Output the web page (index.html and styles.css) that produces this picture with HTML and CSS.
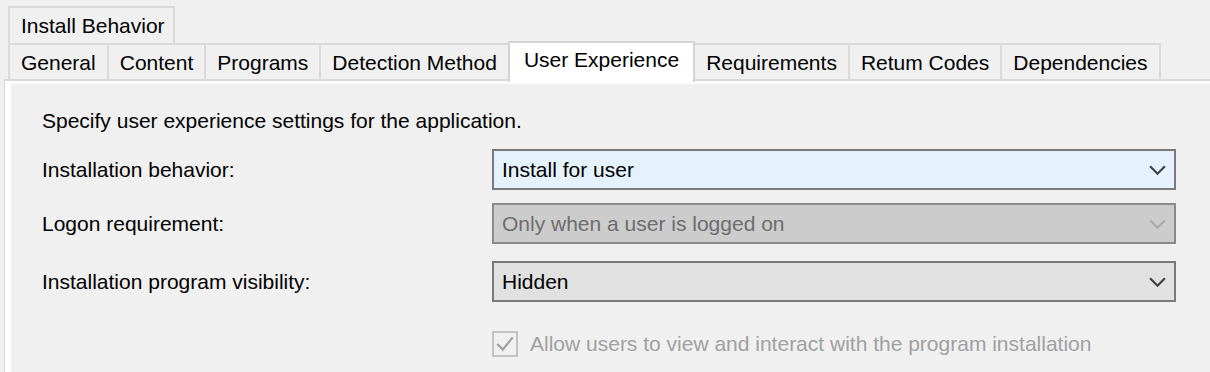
FILE: index.html
```html
<!DOCTYPE html>
<html lang="en">
<head>
  <meta charset="UTF-8">
  <title>Install Behavior</title>
  <link rel="stylesheet" href="styles.css">
</head>
<body>
  <div class="dialog">
    <div class="title-tab">Install Behavior</div>

    <div class="tabs">
      <div class="tab">General</div>
      <div class="tab">Content</div>
      <div class="tab">Programs</div>
      <div class="tab">Detection Method</div>
      <div class="tab active">User Experience</div>
      <div class="tab">Requirements</div>
      <div class="tab">Retum Codes</div>
      <div class="tab">Dependencies</div>
    </div>

    <div class="panel">
      <p class="intro">Specify user experience settings for the application.</p>

      <div class="row">
        <span class="label">Installation behavior:</span>
        <div class="combo focused">
          <span>Install for user</span>
          <svg class="chevron" viewBox="0 0 16 9"><path d="M1 1l7 7 7-7"/></svg>
        </div>
      </div>

      <div class="row">
        <span class="label">Logon requirement:</span>
        <div class="combo disabled">
          <span>Only when a user is logged on</span>
          <svg class="chevron" viewBox="0 0 16 9"><path d="M1 1l7 7 7-7"/></svg>
        </div>
      </div>

      <div class="row">
        <span class="label">Installation program visibility:</span>
        <div class="combo">
          <span>Hidden</span>
          <svg class="chevron" viewBox="0 0 16 9"><path d="M1 1l7 7 7-7"/></svg>
        </div>
      </div>

      <div class="check-row">
        <span class="checkbox">
          <svg viewBox="0 0 20 20"><path d="M3 10l5 5 9-11"/></svg>
        </span>
        <span class="check-label">Allow users to view and interact with the program installation</span>
      </div>
    </div>
  </div>
</body>
</html>
```

FILE: styles.css
```css
* {
  margin: 0;
  padding: 0;
  box-sizing: border-box;
}

body {
  font-family: 'Liberation Sans', Arial, sans-serif;
  font-size: 21px;
  color: #000;
  background-color: #f0f0f0;
  width: 1210px;
  height: 372px;
  overflow: hidden;
}

.dialog {
  padding: 6px 0 0 4px;
}

/* Top caption tab */
.title-tab {
  width: 167px;
  height: 37px;
  margin-left: 4px;
  padding-left: 11px;
  line-height: 36px;
  border: 2px solid #dadada;
  border-bottom: none;
}

/* Tab strip */
.tabs {
  display: flex;
  align-items: flex-end;
  height: 36px;
  margin-left: 4px;
}

.tab {
  height: 36px;
  padding: 0 11px;
  line-height: 36px;
  border: 2px solid #dadada;
  border-bottom: none;
  margin-right: -2px;
  white-space: nowrap;
}

.tab.active {
  position: relative;
  z-index: 1;
  height: 41px;
  margin-bottom: -3px;
  padding: 0 14px;
  line-height: 34px;
  background-color: #fff;
  border-color: #d4d4d4;
}

/* Tab page */
.panel {
  height: 300px;
  border-top: 2px solid #dadada;
  border-left: 1px solid #d6d6d6;
  box-shadow: inset 6px 3px 0 #fff;
  padding: 19px 0 0 37px;
}

.intro {
  line-height: 42px;
  margin-bottom: 7px;
}

.row {
  display: flex;
  align-items: center;
  height: 41px;
  margin-bottom: 13px;
}

.row:nth-of-type(2) {
  margin-bottom: 17px;
}

.label {
  width: 450px;
}

.combo {
  display: flex;
  align-items: center;
  justify-content: space-between;
  width: 684px;
  height: 41px;
  padding: 0 8px;
  border: 2px solid #7a7a7a;
  background-color: #e1e1e1;
}

.combo.focused {
  background-color: #e5f1fb;
}

.combo.disabled {
  background-color: #cccccc;
  border-color: #8a8a8a;
  color: #6d6d6d;
}

.chevron {
  width: 17px;
  height: 10px;
  fill: none;
  stroke: #404040;
  stroke-width: 2;
}

.combo.disabled .chevron {
  stroke: #a9a9a9;
}

/* Disabled checkbox */
.check-row {
  display: flex;
  align-items: center;
  margin-left: 450px;
  margin-top: 29px;
  color: #a0a0a0;
}

.checkbox {
  width: 26px;
  height: 26px;
  border: 2px solid #c3c3c3;
  background-color: #f0f0f0;
  margin-right: 12px;
}

.checkbox svg {
  display: block;
  width: 22px;
  height: 22px;
  fill: none;
  stroke: #a0a0a0;
  stroke-width: 2;
}
```
